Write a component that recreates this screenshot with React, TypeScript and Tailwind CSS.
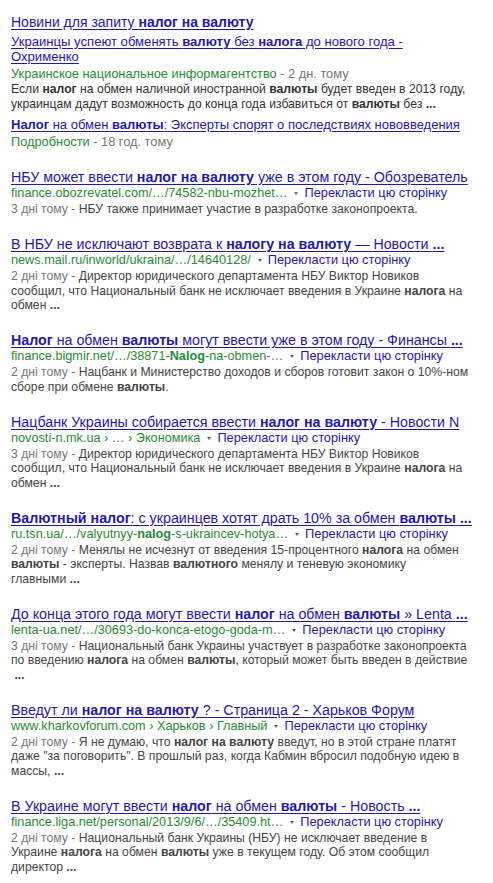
import React from "react";

type Seg = string | { b: string };
const B = (b: string) => ({ b });

function Segs({ segs }: { segs: Seg[] }) {
  return (
    <>
      {segs.map((s, i) =>
        typeof s === "string" ? (
          <span key={i}>{s}</span>
        ) : (
          <b key={i} className="font-bold">
            {s.b}
          </b>
        )
      )}
    </>
  );
}

type Result = {
  title: Seg[];
  url: Seg[];
  date: string;
  lines: Seg[][];
};

const results: Result[] = [
  {
    title: ["НБУ может ввести ", B("налог на валюту"), " уже в этом году - Обозреватель"],
    url: ["finance.obozrevatel.com/…/74582-nbu-mozhet…"],
    date: "3 дні тому - ",
    lines: [["НБУ также принимает участие в разработке законопроекта."]],
  },
  {
    title: ["В НБУ не исключают возврата к ", B("налогу на валюту"), " — Новости ", B("...")],
    url: ["news.mail.ru/inworld/ukraina/…/14640128/"],
    date: "2 дні тому - ",
    lines: [
      ["Директор юридического департамента НБУ Виктор Новиков"],
      ["сообщил, что Национальный банк не исключает введения в Украине ", B("налога"), " на"],
      ["обмен ", B("...")],
    ],
  },
  {
    title: [B("Налог"), " на обмен ", B("валюты"), " могут ввести уже в этом году - Финансы ", B("...")],
    url: ["finance.bigmir.net/…/38871-", B("Nalog"), "-na-obmen-…"],
    date: "2 дні тому - ",
    lines: [
      ["Нацбанк и Министерство доходов и сборов готовит закон о 10%-ном"],
      ["сборе при обмене ", B("валюты"), "."],
    ],
  },
  {
    title: ["Нацбанк Украины собирается ввести ", B("налог на валюту"), " - Новости N"],
    url: ["novosti-n.mk.ua › … › Экономика"],
    date: "3 дні тому - ",
    lines: [
      ["Директор юридического департамента НБУ Виктор Новиков"],
      ["сообщил, что Национальный банк не исключает введения в Украине ", B("налога"), " на"],
      ["обмен ", B("...")],
    ],
  },
  {
    title: [B("Валютный налог"), ": с украинцев хотят драть 10% за обмен ", B("валюты ...")],
    url: ["ru.tsn.ua/…/valyutnyy-", B("nalog"), "-s-ukraincev-hotya…"],
    date: "2 дні тому - ",
    lines: [
      ["Менялы не исчезнут от введения 15-процентного ", B("налога"), " на обмен"],
      [B("валюты"), " - эксперты. Назвав ", B("валютного"), " менялу и теневую экономику"],
      ["главными ", B("...")],
    ],
  },
  {
    title: ["До конца этого года могут ввести ", B("налог"), " на обмен ", B("валюты"), " » Lenta ", B("...")],
    url: ["lenta-ua.net/…/30693-do-konca-etogo-goda-m…"],
    date: "3 дні тому - ",
    lines: [
      ["Национальный банк Украины участвует в разработке законопроекта"],
      ["по введению ", B("налога"), " на обмен ", B("валюты"), ", который может быть введен в действие"],
      ["\u00a0", B("...")],
    ],
  },
  {
    title: ["Введут ли ", B("налог на валюту"), " ? - Страница 2 - Харьков Форум"],
    url: ["www.kharkovforum.com › Харьков › Главный"],
    date: "2 дні тому - ",
    lines: [
      ["Я не думаю, что ", B("налог на валюту"), " введут, но в этой стране платят"],
      ["даже \"за поговорить\". В прошлый раз, когда Кабмин вбросил подобную идею в"],
      ["массы, ", B("...")],
    ],
  },
  {
    title: ["В Украине могут ввести ", B("налог"), " на обмен ", B("валюты"), " - Новость ", B("...")],
    url: ["finance.liga.net/personal/2013/9/6/…/35409.ht…"],
    date: "2 дні тому - ",
    lines: [
      ["Национальный банк Украины (НБУ) не исключает введение в"],
      ["Украине ", B("налога"), " на обмен ", B("валюты"), " уже в текущем году. Об этом сообщил"],
      ["директор ", B("...")],
    ],
  },
];

function ResultItem({ r }: { r: Result }) {
  return (
    <div className="mb-[19.5px]">
      <div className="whitespace-nowrap text-[14.25px] leading-[16px] text-[#1f1aa8] underline underline-offset-[2px]">
        <Segs segs={r.title} />
      </div>
      <div className="flex items-center whitespace-nowrap leading-[16px]">
        <span className="text-[12.7px] text-[#2a8a35]">
          <Segs segs={r.url} />
        </span>
        <span className="ml-[7px] mr-[6px] mt-px inline-block h-0 w-0 border-l-[2.5px] border-r-[2.5px] border-t-[3px] border-l-transparent border-r-transparent border-t-[#2a8a35]" />
        <span className="text-[12.8px] text-[#1f1aa8]">Перекласти цю сторінку</span>
      </div>
      <div className="mt-px text-[12.2px] leading-[14.5px] text-[#454545]">
        {r.lines.map((l, i) => (
          <div key={i} className="whitespace-nowrap">
            {i === 0 && <span className="text-[#777]">{r.date}</span>}
            <Segs segs={l} />
          </div>
        ))}
      </div>
    </div>
  );
}

export default function App() {
  return (
    <div className="min-h-[883px] w-[493px] bg-white pl-[11px] pt-[14px] font-['Liberation_Sans',Arial,sans-serif]">
      <div className="whitespace-nowrap text-[14px] leading-[16px] text-[#1f1aa8] underline underline-offset-[2px]">
        Новини для запиту <b className="font-bold">налог на валюту</b>
      </div>
      <div className="mt-[4px] text-[13.1px] leading-[15px] text-[#1f1aa8] underline underline-offset-[2px]">
        <div className="whitespace-nowrap">
          Украинцы успеют обменять <b className="font-bold">валюту</b> без <b className="font-bold">налога</b> до нового года -
        </div>
        <div className="whitespace-nowrap">Охрименко</div>
      </div>
      <div className="mt-[2px] whitespace-nowrap text-[12.8px] leading-[16px]">
        <span className="text-[#2a8a35]">Украинское национальное информагентство</span>
        <span className="text-[#777]"> - 2 дн. тому</span>
      </div>
      <div className="text-[12.2px] leading-[15px] text-[#333]">
        <div className="whitespace-nowrap">
          Если <b className="font-bold">налог</b> на обмен наличной иностранной <b className="font-bold">валюты</b> будет введен в 2013 году,
        </div>
        <div className="whitespace-nowrap">
          украинцам дадут возможность до конца года избавиться от <b className="font-bold">валюты</b> без <b className="font-bold">...</b>
        </div>
      </div>
      <div className="mt-[5px] whitespace-nowrap text-[13px] leading-[16px] text-[#1f1aa8] underline underline-offset-[2px]">
        <b className="font-bold">Налог</b> на обмен <b className="font-bold">валюты</b>: Эксперты спорят о последствиях нововведения
      </div>
      <div className="mt-[1px] whitespace-nowrap text-[12.8px] leading-[16px]">
        <span className="text-[#2a8a35]">Подробности</span>
        <span className="text-[#777]"> - 18 год. тому</span>
      </div>
      <div className="mt-[19px]">
        {results.map((r, i) => (
          <ResultItem key={i} r={r} />
        ))}
      </div>
    </div>
  );
}
